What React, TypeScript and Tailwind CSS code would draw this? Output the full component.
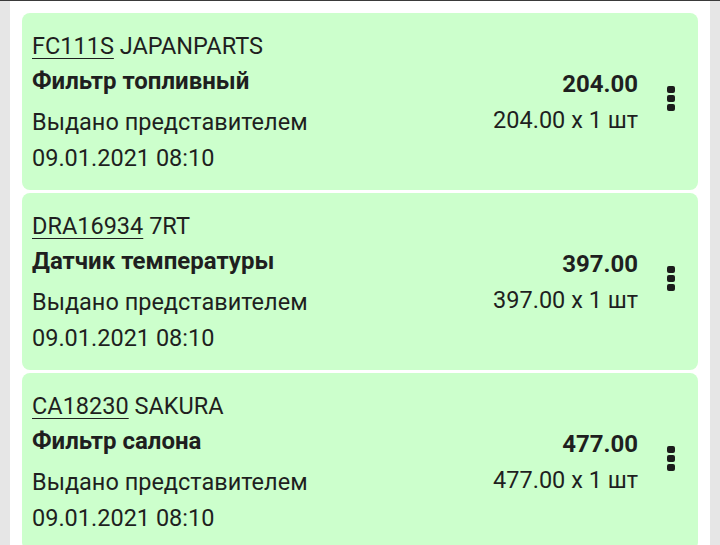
const items = [
  { code: 'FC111S', brand: 'JAPANPARTS', name: 'Фильтр топливный', price: '204.00', qty: 1 },
  { code: 'DRA16934', brand: '7RT', name: 'Датчик температуры', price: '397.00', qty: 1 },
  { code: 'CA18230', brand: 'SAKURA', name: 'Фильтр салона', price: '477.00', qty: 1 },
];

function Dots() {
  return (
    <div className="flex flex-col gap-[2px] -mt-[8px]">
      <span className="block w-[8px] h-[7px] rounded-[2px] bg-[#1c1c1c]" />
      <span className="block w-[8px] h-[7px] rounded-[2px] bg-[#1c1c1c]" />
      <span className="block w-[8px] h-[7px] rounded-[2px] bg-[#1c1c1c]" />
    </div>
  );
}

export default function App() {
  return (
    <div
      className="w-[720px] h-[545px] overflow-hidden flex flex-col border-t border-[#3a3a3a] text-[#1f1f1f]"
      style={{ fontFamily: 'Roboto, "Noto Sans", sans-serif' }}
    >
      <div className="flex flex-1 min-h-0">
        <div className="w-[10px] bg-[#e6e6e6]" />
        <div className="flex-1 bg-white px-[12px] pt-[12px] flex flex-col gap-[3px]">
          {items.map((it) => (
            <div
              key={it.code}
              className="shrink-0 bg-[#ccffcc] rounded-[8px] pl-[10px] pr-[23px] pt-[15px] pb-[14px] flex items-center"
            >
              <div className="flex-1 text-[23.5px]">
                <div className="leading-[36px]">
                  <span className="underline underline-offset-[4px] decoration-[1px]">{it.code}</span> {it.brand}
                </div>
                <div className="leading-[35px] font-bold text-[24px]">{it.name}</div>
                <div className="leading-[36px] mt-[5px]">Выдано представителем</div>
                <div className="leading-[36px]">09.01.2021 08:10</div>
              </div>
              <div className="text-right text-[23.5px] mr-[29px]">
                <div className="leading-[36px] font-bold text-[24px]">{it.price}</div>
                <div className="leading-[36px]">{it.price} x {it.qty} шт</div>
              </div>
              <Dots />
            </div>
          ))}
        </div>
        <div className="w-[10px] bg-[#e6e6e6]" />
      </div>
    </div>
  );
}
